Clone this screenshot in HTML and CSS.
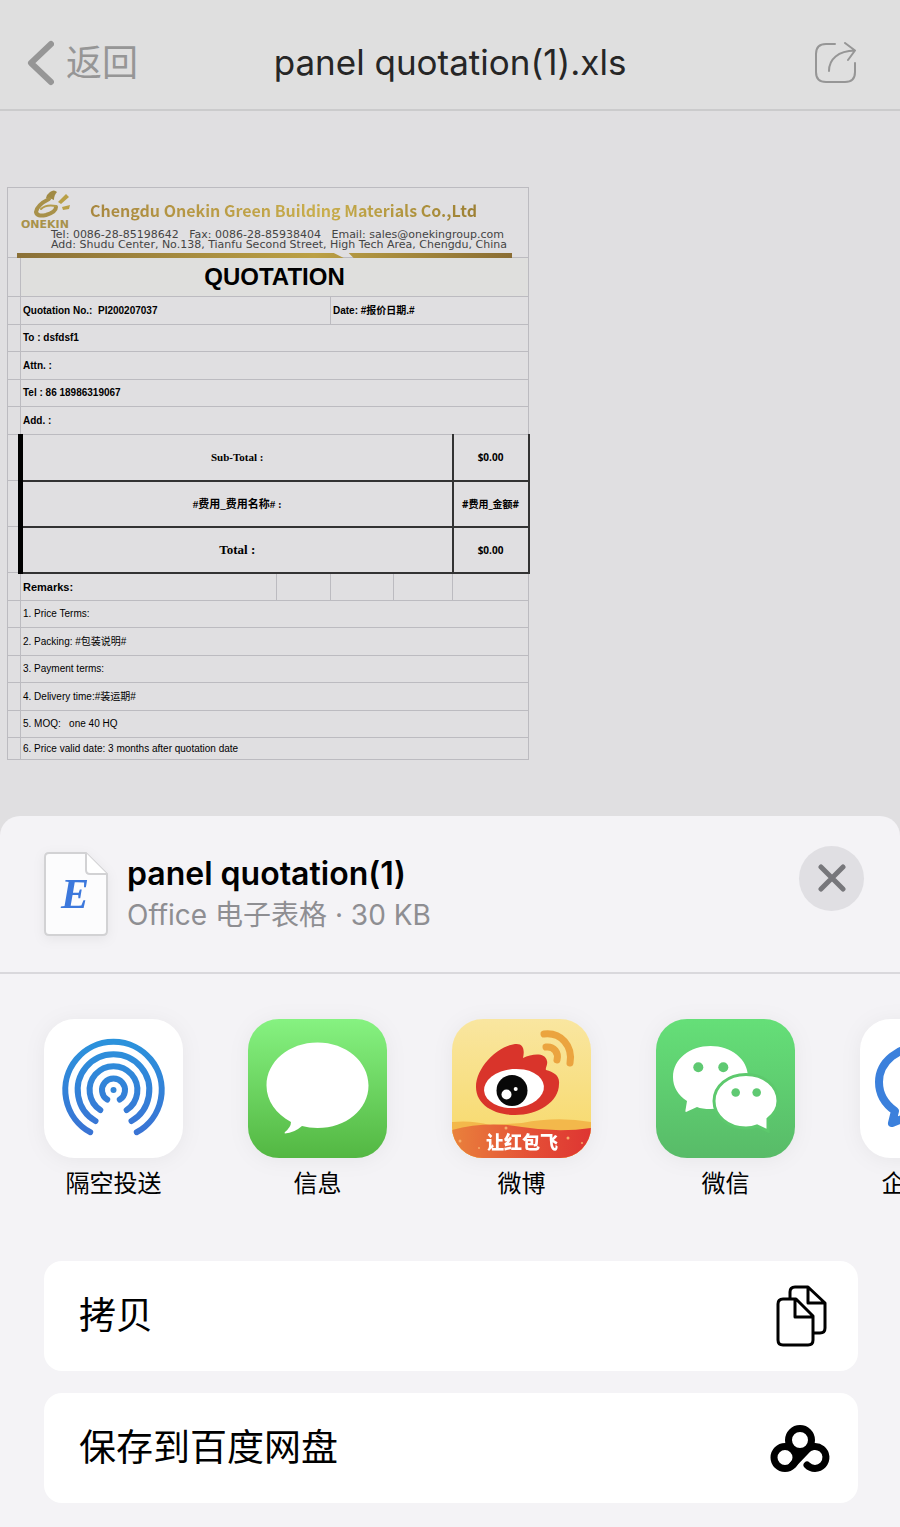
FILE: index.html
```html
<!DOCTYPE html>
<html lang="zh-CN">
<head>
    <meta charset="UTF-8">
    <meta name="viewport" content="width=device-width, initial-scale=1.0">
    <title>panel quotation(1).xls</title>
    <link rel="stylesheet" href="styles.css">
</head>
<body>
    <header class="navbar">
        <button class="back" type="button">
            <svg width="28" height="46" viewBox="0 0 28 46" fill="none" stroke="#969696" stroke-width="6" stroke-linecap="round" stroke-linejoin="round"><path d="M25 4L5 23L25 42"/></svg>
            返回
        </button>
        <h1>panel quotation(1).xls</h1>
        <button class="open" type="button" aria-label="分享">
            <svg width="44" height="42" viewBox="0 0 44 42" fill="none" stroke="#969696" stroke-width="2" stroke-linecap="round" stroke-linejoin="round">
                <path d="M21 2H12Q2 2 2 12V30Q2 40 12 40H31Q41 40 41 30V21"/>
                <path d="M15 29C15 17 24 9 41 8.500M31 1L41 8.500L34 18"/>
            </svg>
        </button>
    </header>

    <main class="document">
        <table class="quote">
            <colgroup>
                <col class="c-edge"><col class="c-name"><col class="c-a"><col class="c-b"><col class="c-c"><col class="c-amount">
            </colgroup>
            <thead>
                <tr class="head">
                    <td colspan="6">
                        <div class="letterhead">
                            <svg class="logo" width="60" height="44" viewBox="0 0 60 44">
                                <path d="M30 3Q34 0 37 3Q34 6 34 11Q31 9 26 9Q27 5 30 3Z" fill="#a08a45"/>
                                <path d="M29 10Q17 16 16 23Q17 28 26 26Q36 23 36 18" fill="none" stroke="#a8914a" stroke-width="4" stroke-linecap="round"/>
                                <path d="M21 20Q26 15 36 17" fill="none" stroke="#b49c4c" stroke-width="2" stroke-linecap="round"/>
                                <path d="M38 13L46 5L49 8L41 15ZM42 18L50 16L49 20L43 21Z" fill="#b9a047"/>
                                <text x="1" y="39">ONEKIN</text>
                            </svg>
                            <div class="company">Chengdu Onekin Green Building Materials Co.,Ltd</div>
                            <div class="contact">
                                <div>Tel: 0086-28-85198642 &nbsp; Fax: 0086-28-85938404 &nbsp; Email: sales@onekingroup.com</div>
                                <div>Add: Shudu Center, No.138, Tianfu Second Street, High Tech Area, Chengdu, China</div>
                            </div>
                            <div class="rule"></div>
                        </div>
                    </td>
                </tr>
                <tr class="title"><td></td><th colspan="5">QUOTATION</th></tr>
            </thead>
            <tbody class="info">
                <tr><td></td><td colspan="2">Quotation No.: &nbsp;PI200207037</td><td colspan="3">Date: #报价日期.#</td></tr>
                <tr><td></td><td colspan="5">To : dsfdsf1</td></tr>
                <tr><td></td><td colspan="5">Attn. :</td></tr>
                <tr><td></td><td colspan="5">Tel : 86 18986319067</td></tr>
                <tr><td></td><td colspan="5">Add. :</td></tr>
            </tbody>
            <tbody class="totals">
                <tr><td></td><th colspan="4">Sub-Total :</th><td>$0.00</td></tr>
                <tr><td></td><th colspan="4">#费用_费用名称# :</th><td>#费用_金额#</td></tr>
                <tr><td></td><th class="grand" colspan="4">Total :</th><td>$0.00</td></tr>
            </tbody>
            <tbody class="remarks">
                <tr><td></td><th>Remarks:</th><td></td><td></td><td></td><td></td></tr>
                <tr><td></td><td colspan="5">1. Price Terms:</td></tr>
                <tr><td></td><td colspan="5">2. Packing: #包装说明#</td></tr>
                <tr><td></td><td colspan="5">3. Payment terms:</td></tr>
                <tr><td></td><td colspan="5">4. Delivery time:#装运期#</td></tr>
                <tr><td></td><td colspan="5">5. MOQ: &nbsp; one 40 HQ</td></tr>
                <tr class="last"><td></td><td colspan="5">6. Price valid date: 3 months after quotation date</td></tr>
            </tbody>
        </table>
    </main>

    <section class="sheet">
        <div class="file">
            <svg class="file-icon" width="64" height="84" viewBox="0 0 64 84">
                <path d="M5 1H42L63 22V79Q63 83 59 83H5Q1 83 1 79V5Q1 1 5 1Z" fill="#fcfcfd" stroke="#d2d2d4" stroke-width="2"/>
                <path d="M42 1V18Q42 22 46 22H63" fill="#fff" stroke="#d2d2d4" stroke-width="2"/>
                <text x="31" y="56" text-anchor="middle">E</text>
            </svg>
            <div class="file-text">
                <h2>panel quotation(1)</h2>
                <p>Office 电子表格 · 30 KB</p>
            </div>
            <button class="close" type="button" aria-label="关闭">
                <svg width="28" height="28" viewBox="0 0 28 28" stroke="#77777b" stroke-width="5" stroke-linecap="round"><path d="M3 3L25 25M25 3L3 25"/></svg>
            </button>
        </div>

        <div class="apps">
            <button class="app" type="button">
                <svg viewBox="0 0 139 139" fill="none" stroke="url(#air)" stroke-width="6" stroke-linecap="round">
                    <defs><linearGradient id="air" gradientUnits="userSpaceOnUse" x1="0" y1="20" x2="0" y2="118"><stop offset="0" stop-color="#2b93dc"/><stop offset="1" stop-color="#3a72d4"/></linearGradient></defs>
                    <rect width="139" height="139" rx="31" fill="#fff" stroke="none"/>
                    <path d="M46.200 113.200A48.200 48.200 0 1 1 92.800 113.200"/>
                    <path d="M51.500 102A35.800 35.800 0 1 1 87.500 102"/>
                    <path d="M56.300 91A23.900 23.900 0 1 1 82.700 91"/>
                    <path d="M63.200 80.600A11.500 11.500 0 1 1 75.800 80.600"/>
                    <circle cx="69.500" cy="71" r="3" fill="#3386d8" stroke="none"/>
                </svg>
                <span>隔空投送</span>
            </button>
            <button class="app" type="button">
                <svg viewBox="0 0 139 139">
                    <defs><linearGradient id="msg" x1="0" y1="0" x2="0" y2="1"><stop offset="0" stop-color="#86f281"/><stop offset="1" stop-color="#53b742"/></linearGradient></defs>
                    <rect width="139" height="139" rx="31" fill="url(#msg)"/>
                    <path d="M69.500 23.500C98 23.500 120.500 42.500 120.500 66.500S98 109 69.500 109Q61 109 54 107Q46 114 37 114.500Q36 114 37 113Q43 108 43 103C28 95 18.500 82 18.500 66.500C18.500 42.500 41 23.500 69.500 23.500Z" fill="#fff"/>
                </svg>
                <span>信息</span>
            </button>
            <button class="app" type="button">
                <svg viewBox="0 0 139 139">
                    <defs>
                        <linearGradient id="wb" x1="0" y1="0" x2="0" y2="1"><stop offset="0" stop-color="#f9e6a0"/><stop offset="1" stop-color="#f7d866"/></linearGradient>
                        <linearGradient id="ribbon"><stop offset="0" stop-color="#e9813c"/><stop offset=".6" stop-color="#e44d36"/><stop offset="1" stop-color="#de3532"/></linearGradient>
                        <clipPath id="tile"><rect width="139" height="139" rx="31"/></clipPath>
                    </defs>
                    <g clip-path="url(#tile)">
                        <rect width="139" height="139" fill="url(#wb)"/>
                        <path d="M0 103Q20 101 38 106L70 104Q105 97 139 103V139H0Z" fill="#f3b84b"/>
                        <path d="M0 111Q34 102 70 108T139 109V139H0Z" fill="url(#ribbon)"/>
                    </g>
                    <path d="M24 68C24 50 43 28 63 25C71 24 73 30 71 39C80 35 93 33 95 42C96 46 93 49 94 51C102 53 108 57 107 65C107 83 86 96 63 96C41 96 24 85 24 68Z" fill="#d9342b"/>
                    <ellipse cx="62" cy="69.500" rx="30" ry="19.500" fill="#fff" transform="rotate(-5 62 69.500)"/>
                    <circle cx="60" cy="71.500" r="15.500" fill="#080808"/>
                    <circle cx="54.500" cy="75.500" r="5" fill="#fff"/>
                    <circle cx="63.700" cy="70" r="2" fill="#fff"/>
                    <path d="M92 15C109 13 121 27 118 44M94 28C102 27 107 34 105 41" fill="none" stroke="#eba43f" stroke-width="7" stroke-linecap="round"/>
                    <g fill="#f6ad6a"><circle cx="54" cy="109" r="1.500"/><circle cx="116" cy="119" r="1.500"/><circle cx="8" cy="122" r="1.500"/><circle cx="27" cy="129" r="1"/><circle cx="130" cy="124" r="1"/></g>
                    <text class="slogan" x="70" y="130" text-anchor="middle">让红包飞</text>
                </svg>
                <span>微博</span>
            </button>
            <button class="app" type="button">
                <svg viewBox="0 0 139 139">
                    <defs><linearGradient id="wx" x1="0" y1="0" x2="0" y2="1"><stop offset="0" stop-color="#65df78"/><stop offset="1" stop-color="#58bb68"/></linearGradient></defs>
                    <rect width="139" height="139" rx="31" fill="url(#wx)"/>
                    <path d="M54.500 27C75 27 92 40 92 58S75 90 54.500 90Q46 90 41 88L30 93Q29 93 29.500 91L31 82C22 76 17 68 17 58C17 40 34 27 54.500 27Z" fill="#fff"/>
                    <path d="M90 55.500C108 55.500 122 67 122 82Q122 92 112 100L112 112L101 107Q96 109 90 109C72 109 58 97 58 82S72 55.500 90 55.500Z" fill="#fff" stroke="#5dc96d" stroke-width="3"/>
                    <g fill="#5fc972"><circle cx="42.300" cy="48.300" r="5"/><circle cx="67.300" cy="48.300" r="5"/><circle cx="79.700" cy="73.500" r="4.300"/><circle cx="100.700" cy="73.500" r="4.300"/></g>
                </svg>
                <span>微信</span>
            </button>
            <button class="app" type="button">
                <svg viewBox="0 0 139 139">
                    <rect width="139" height="139" rx="31" fill="#fff"/>
                    <path d="M64 27C38 27 19 43 19 63C19 75 25 85 35 92L32 104L47 98Q55 100 64 100C90 100 108 84 108 63S90 27 64 27Z" fill="none" stroke="#3b80dc" stroke-width="8" stroke-linejoin="round"/>
                </svg>
                <span>企业微信</span>
            </button>
        </div>

        <div class="actions">
            <button class="action" type="button">
                <span>拷贝</span>
                <svg width="52" height="62" viewBox="0 0 52 62" fill="none" stroke="#000" stroke-width="3" stroke-linejoin="round">
                    <path d="M15 13V7Q15 2 20 2H33L50 18V43Q50 48 45 48H39M33 2V18H50"/>
                    <path d="M8 14H21L38 31V55Q38 60 33 60H8Q3 60 3 55V19Q3 14 8 14ZM20 14V32H38"/>
                </svg>
            </button>
            <button class="action" type="button">
                <span>保存到百度网盘</span>
                <svg width="60" height="50" viewBox="0 0 60 50" fill="none" stroke="#000" stroke-width="7" stroke-linecap="round">
                    <path d="M18 24L30 22L42 24L26 40Z" fill="#000" stroke="none"/>
                    <circle cx="30" cy="17" r="11.500" fill="#fff"/>
                    <circle cx="15" cy="34.500" r="11" fill="#fff"/>
                    <path d="M22.500 42L36 28A11 11 0 1 1 37 42"/>
                </svg>
            </button>
        </div>
    </section>
</body>
</html>
```
FILE: styles.css
```css
* {
    box-sizing: border-box;
}
body {
    margin: 0;
    background-color: #e0dfe1;
    font-family: Inter, "Noto Sans CJK SC", sans-serif;
    color: #000;
}
button {
    border: none;
    padding: 0;
    background: none;
    color: inherit;
    font: inherit;
    cursor: pointer;
}
h1, h2, p {
    margin: 0;
}
svg {
    display: block;
    flex: none;
}

/* Top bar */
.navbar {
    display: grid;
    grid-template-columns: 1fr auto 1fr;
    align-items: center;
    height: 111px;
    padding: 16px 26px 0;
    background-color: #dfdfdf;
    border-bottom: 2px solid #cbcbcc;
}
.navbar h1 {
    font-size: 35px;
    font-weight: 400;
    line-height: 42px;
    padding-bottom: 2px;
    color: #262626;
}
.back {
    display: flex;
    align-items: center;
    gap: 12px;
    font-size: 36px;
    line-height: 46px;
    color: #969696;
}
.open {
    justify-self: end;
    margin-right: 16px;
}

/* Spreadsheet */
.document {
    padding: 76px 7px 56px;
}
.quote {
    width: 521px;
    table-layout: fixed;
    border-collapse: collapse;
    font-family: "Liberation Sans", "Noto Sans CJK SC", sans-serif;
    font-size: 10px;
    line-height: 14px;
}
.c-edge { width: 13px; }
.c-name { width: 256px; }
.c-a { width: 54px; }
.c-b { width: 63px; }
.c-c { width: 59px; }
.c-amount { width: 76px; }
.quote td,
.quote th {
    padding: 0 2px;
    border: 1px solid #bcbbc0;
    text-align: left;
}
.quote .head td {
    height: 70px;
    padding: 0;
    vertical-align: top;
}
.quote .title th {
    height: 39px;
    padding: 0 2px;
    background-color: #dfdfdd;
    font-size: 24px;
    line-height: 30px;
    text-align: center;
}
.info td {
    height: 28px;
    font-weight: bold;
}
.info tr:nth-child(even) td,
.remarks tr:nth-child(even) td {
    height: 27px;
}
.totals td,
.totals th {
    height: 46px;
}
.quote .totals th {
    border: 2px solid #333;
    border-left: 5px solid #000;
    font-family: "Liberation Serif", "Noto Sans CJK SC", serif;
    font-size: 11px;
    text-align: center;
}
.quote .totals .grand {
    font-size: 13px;
}
.quote .totals td:last-child {
    border: 2px solid #333;
    padding: 0;
    font-family: "Open Sans", "Noto Sans CJK SC", sans-serif;
    font-weight: bold;
    text-align: center;
}
.quote .totals tr:first-child th,
.quote .totals tr:first-child td:last-child {
    border-top: 1px solid #bcbbc0;
}
.remarks td,
.remarks th {
    height: 28px;
}
.remarks th {
    font-size: 11px;
}
.quote .remarks .last td {
    height: 22px;
}

.letterhead {
    position: relative;
    height: 69px;
}
.logo {
    position: absolute;
    top: 1px;
    left: 12px;
}
.logo text {
    font: bold 11px "DejaVu Sans", sans-serif;
    fill: #a8924a;
}
.company {
    width: max-content;
    margin-left: 82px;
    padding-top: 8px;
    font-family: "Noto Sans CJK SC", sans-serif;
    font-size: 16px;
    font-weight: bold;
    line-height: 28px;
    white-space: nowrap;
    background: linear-gradient(90deg, #a8873f, #c9ae4c 60%, #9d8034);
    background-clip: text;
    -webkit-background-clip: text;
    color: transparent;
}
.contact {
    padding: 6px 0 0 43px;
    font-family: "DejaVu Sans", sans-serif;
    font-size: 11px;
    line-height: 10px;
    color: #444;
    white-space: nowrap;
}
.rule {
    position: absolute;
    left: 9px;
    right: 16px;
    bottom: -1px;
    height: 5px;
    background: linear-gradient(90deg, #8a7037, #bba044 60%, #8a6d33);
    clip-path: polygon(0 0, 64% 0, 66% 100%, 68% 100%, 67% 0, 100% 0, 100% 100%, 68% 100%, 66% 100%, 0 100%);
}

/* Share sheet */
.sheet {
    padding-bottom: 24px;
    background-color: #f4f3f6;
    border-radius: 20px 20px 0 0;
}
.file {
    display: flex;
    align-items: center;
    height: 158px;
    padding: 0 36px 0 44px;
    border-bottom: 2px solid #d9d8dc;
}
.file-icon {
    filter: drop-shadow(0 3px 6px rgba(0, 0, 0, 0.06));
}
.file-icon text {
    font: italic bold 42px "Liberation Serif", serif;
    fill: #3c78dc;
}
.file-text {
    flex: 1;
    padding-left: 19px;
}
.file-text h2 {
    font-size: 32px;
    font-weight: 600;
    line-height: 42px;
}
.file-text p {
    font-size: 28px;
    line-height: 40px;
    color: #8e8e92;
}
.close {
    display: flex;
    align-items: center;
    justify-content: center;
    width: 65px;
    height: 65px;
    margin-bottom: 32px;
    border-radius: 50%;
    background-color: #e0dfe3;
}
.apps {
    display: flex;
    gap: 65px;
    padding: 45px 0 59px 44px;
    overflow-x: auto;
    scrollbar-width: none;
}
.app {
    flex: none;
    width: 139px;
}
.app svg {
    width: 139px;
    height: 139px;
    filter: drop-shadow(0 2px 10px rgba(0, 0, 0, 0.05));
}
.app span {
    display: block;
    padding-top: 8px;
    font-size: 24px;
    line-height: 36px;
}
.slogan {
    font: 900 18px "Noto Sans CJK SC", sans-serif;
    fill: #fff;
}
.actions {
    display: grid;
    gap: 22px;
    padding: 0 42px 0 44px;
}
.action {
    display: flex;
    align-items: center;
    justify-content: space-between;
    height: 110px;
    padding: 0 28px 0 35px;
    border-radius: 18px;
    background-color: #fff;
    font-size: 37px;
}
.action span {
    padding-bottom: 6px;
}
.action:first-child svg {
    margin-right: 3px;
}
```
